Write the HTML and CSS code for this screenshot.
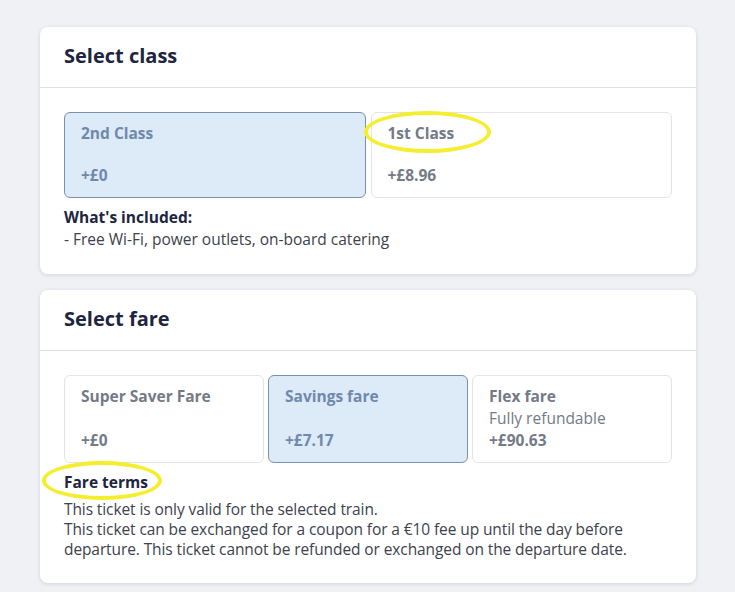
FILE: index.html
```html
<!DOCTYPE html>
<html lang="en">
<head>
<meta charset="utf-8">
<title>Select class and fare</title>
<link rel="stylesheet" href="styles.css">
</head>
<body>
<main class="page">
  <section class="card">
    <header class="card-head"><h2 class="card-title">Select class</h2></header>
    <div class="card-body">
      <div class="options options-2">
        <div class="option option-class is-selected">
          <div class="opt-title">2nd Class</div>
          <div class="opt-price">+£0</div>
        </div>
        <div class="option option-class">
          <div class="opt-title marked">1st Class<span class="ring ring-class"></span></div>
          <div class="opt-price">+£8.96</div>
        </div>
      </div>
      <div class="info">
        <div class="info-title">What's included:</div>
        <div class="info-text">- Free Wi-Fi, power outlets, on-board catering</div>
      </div>
    </div>
  </section>

  <section class="card">
    <header class="card-head"><h2 class="card-title">Select fare</h2></header>
    <div class="card-body">
      <div class="options options-3">
        <div class="option">
          <div class="opt-title">Super Saver Fare</div>
          <div class="opt-price">+£0</div>
        </div>
        <div class="option is-selected">
          <div class="opt-title">Savings fare</div>
          <div class="opt-price">+£7.17</div>
        </div>
        <div class="option">
          <div class="opt-title">Flex fare</div>
          <div class="opt-sub">Fully refundable</div>
          <div class="opt-price">+£90.63</div>
        </div>
      </div>
      <div class="info">
        <div class="info-title marked">Fare terms<span class="ring ring-terms"></span></div>
        <p class="terms">This ticket is only valid for the selected train.<br>This ticket can be exchanged for a coupon for a €10 fee up until the day before departure. This ticket cannot be refunded or exchanged on the departure date.</p>
      </div>
    </div>
  </section>
</main>
</body>
</html>
```

FILE: styles.css
```css
* { box-sizing: border-box; }
html, body { margin: 0; padding: 0; }
body {
  background: #eff1f5;
  font-family: "Open Sans", "Liberation Sans", sans-serif;
  color: #1d2540;
  width: 735px;
  height: 592px;
  overflow: hidden;
}
.page {
  padding: 27px 39px 0 40px;
  display: flex;
  flex-direction: column;
  gap: 16px;
}
.card {
  background: #fff;
  border-radius: 8px;
  box-shadow: 0 1px 4px rgba(30, 40, 70, 0.14);
}
.card-head {
  height: 61px;
  border-bottom: 1px solid #dcdfe4;
  display: flex;
  align-items: center;
  padding: 0 24px 3px;
}
.card-title {
  margin: 0;
  font-size: 20px;
  font-weight: 700;
  color: #1d2540;
}
.card-body {
  padding: 24px 24px 24px;
}
.options {
  display: grid;
  gap: 5px;
}
.options-2 { grid-template-columns: 1fr 1fr; }
.options-3 { grid-template-columns: 1fr 1fr 1fr; gap: 4px; }
.option {
  border: 1px solid #e2e4e8;
  border-radius: 6px;
  padding: 9px 16px 11px;
  display: flex;
  flex-direction: column;
  justify-content: space-between;
  min-height: 88px;
  color: #747a87;
  font-size: 15.5px;
  line-height: 22px;
}
.option-class { min-height: 86px; }
.option.is-selected {
  background: #ddeaf8;
  border-color: #7a90ab;
  color: #6f89ad;
}
.opt-title, .opt-price { font-weight: 700; }
.opt-sub { font-weight: 400; }
.info {
  margin-top: 8px;
  font-size: 15.5px;
  line-height: 22px;
}
.info-title { font-weight: 700; color: #1d2540; }
.info-text { color: #3d424d; }
.terms {
  margin: 6px 0 0;
  font-size: 15.5px;
  line-height: 20px;
  color: #3d424d;
  letter-spacing: -0.1px;
}
.marked { position: relative; }
.ring {
  position: absolute;
  border: 4px solid #f4ee2c;
  border-radius: 50%;
  pointer-events: none;
}
.ring-class { left: -24px; top: -11px; width: 127px; height: 42px; }
.ring-terms { left: -22px; top: -10px; width: 120px; height: 39px; }
```
